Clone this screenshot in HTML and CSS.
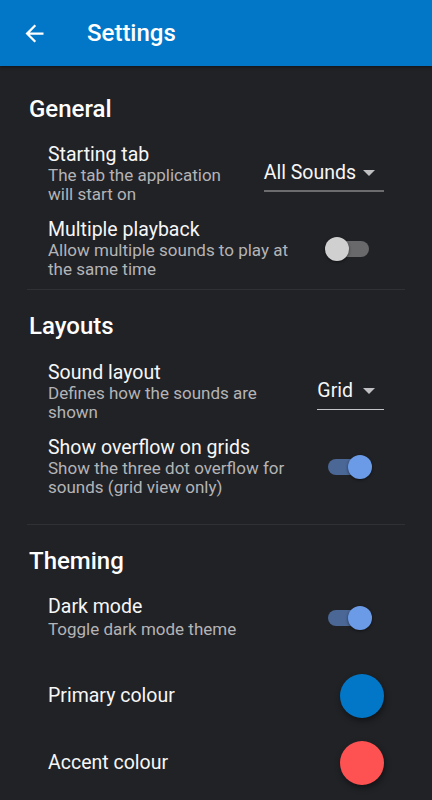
FILE: index.html
```html
<!DOCTYPE html>
<html lang="en">

<head>
    <meta charset="UTF-8">
    <meta name="viewport" content="width=device-width, initial-scale=1.0">
    <title>Settings</title>
    <link rel="stylesheet" href="styles.css">
</head>

<body>
    <header class="appbar">
        <svg class="back" viewBox="0 0 24 24" width="27" height="27">
            <path d="M20 11H7.83l5.59-5.59L12 4l-8 8 8 8 1.41-1.41L7.83 13H20v-2z" fill="#fff"/>
        </svg>
        <h1 class="appbar-title">Settings</h1>
    </header>

    <main class="content">
        <section class="group">
            <h2 class="group-title">General</h2>
            <div class="row">
                <div class="row-text">
                    <div class="row-title">Starting tab</div>
                    <div class="row-sub">The tab the application<br>will start on</div>
                </div>
                <div class="dropdown">
                    <span>All Sounds</span>
                    <span class="caret"></span>
                </div>
            </div>
            <div class="row">
                <div class="row-text">
                    <div class="row-title">Multiple playback</div>
                    <div class="row-sub">Allow multiple sounds to play at<br>the same time</div>
                </div>
                <div class="switch">
                    <span class="thumb"></span>
                </div>
            </div>
        </section>

        <section class="group group-layouts">
            <h2 class="group-title">Layouts</h2>
            <div class="row">
                <div class="row-text">
                    <div class="row-title">Sound layout</div>
                    <div class="row-sub">Defines how the sounds are<br>shown</div>
                </div>
                <div class="dropdown dropdown-light">
                    <span>Grid</span>
                    <span class="caret"></span>
                </div>
            </div>
            <div class="row">
                <div class="row-text">
                    <div class="row-title">Show overflow on grids</div>
                    <div class="row-sub">Show the three dot overflow for<br>sounds (grid view only)</div>
                </div>
                <div class="switch on">
                    <span class="thumb"></span>
                </div>
            </div>
        </section>

        <section class="group">
            <h2 class="group-title">Theming</h2>
            <div class="row row-single">
                <div class="row-text">
                    <div class="row-title">Dark mode</div>
                    <div class="row-sub">Toggle dark mode theme</div>
                </div>
                <div class="switch on">
                    <span class="thumb"></span>
                </div>
            </div>
            <div class="swatches">
                <div class="row row-colour">
                    <div class="row-title">Primary colour</div>
                    <span class="swatch primary"></span>
                </div>
                <div class="row row-colour">
                    <div class="row-title">Accent colour</div>
                    <span class="swatch accent"></span>
                </div>
            </div>
        </section>
    </main>
</body>

</html>
```

FILE: styles.css
```css
body {
    margin: 0;
    background-color: #212226;
    color: #ffffff;
    font-family: Roboto, "Liberation Sans", sans-serif;
}

.appbar {
    height: 66px;
    display: flex;
    align-items: center;
    background-color: #0277c8;
    box-shadow: 0 1px 3px rgba(0, 0, 0, 0.45);
}

.back {
    margin-left: 21px;
    flex-shrink: 0;
}

.appbar-title {
    margin: 0 0 0 39px;
    font-size: 24px;
    line-height: 28px;
    font-weight: 500;
}

.content {
    padding: 29px 27px 0;
}

.group + .group {
    border-top: 1px solid #303135;
    padding-top: 22px;
}

.group {
    padding-bottom: 3px;
}

.group-layouts {
    padding-bottom: 20px;
}

.group-title {
    margin: 0 0 13px 2px;
    font-size: 24px;
    line-height: 28px;
    font-weight: 500;
}

.group-layouts .group-title {
    margin-bottom: 14px;
}

.row {
    display: flex;
    align-items: center;
    justify-content: space-between;
    padding: 7px 21px;
}

.row-title {
    font-size: 19.5px;
    line-height: 23px;
    color: #f6f6f6;
}

.row-sub {
    font-size: 17px;
    line-height: 19px;
    color: #b4b4b6;
}

.row-single .row-sub {
    margin-top: 2px;
}

.row-single .switch {
    margin-top: 2px;
}

/* dropdown select */
.dropdown {
    display: flex;
    align-items: center;
    margin-top: 6px;
    padding: 0 9px 6px 0;
    border-bottom: 2px solid #6c6c6e;
    font-size: 19.5px;
    line-height: 23px;
    color: #f6f6f6;
}

.dropdown .caret {
    margin-left: 7px;
}

.dropdown-light {
    border-bottom: 1px solid #c4c4c6;
    padding-bottom: 7px;
}

.dropdown-light .caret {
    margin-left: 10px;
}

.caret {
    width: 0;
    height: 0;
    border-left: 6px solid transparent;
    border-right: 6px solid transparent;
    border-top: 6px solid #c0c0c2;
}

/* toggle switch */
.switch {
    position: relative;
    width: 41px;
    height: 16px;
    margin-right: 15px;
    border-radius: 8px;
    background-color: #69696b;
}

.thumb {
    position: absolute;
    top: -4px;
    left: -3px;
    width: 24px;
    height: 24px;
    border-radius: 50%;
    background-color: #d0d0d0;
    box-shadow: 0 1px 3px rgba(0, 0, 0, 0.5);
}

.switch.on {
    background-color: #4b6796;
}

.switch.on .thumb {
    left: auto;
    right: -3px;
    background-color: #6b9be6;
}

/* colour pickers */
.swatches {
    padding-top: 16px;
}

.row-colour {
    padding-top: 11.5px;
    padding-bottom: 11.5px;
}

.swatch {
    width: 44px;
    height: 44px;
    border-radius: 50%;
    box-shadow: 1px 3px 6px rgba(0, 0, 0, 0.45);
}

.primary {
    background-color: #0277c8;
}

.accent {
    background-color: #fe5252;
}
```
